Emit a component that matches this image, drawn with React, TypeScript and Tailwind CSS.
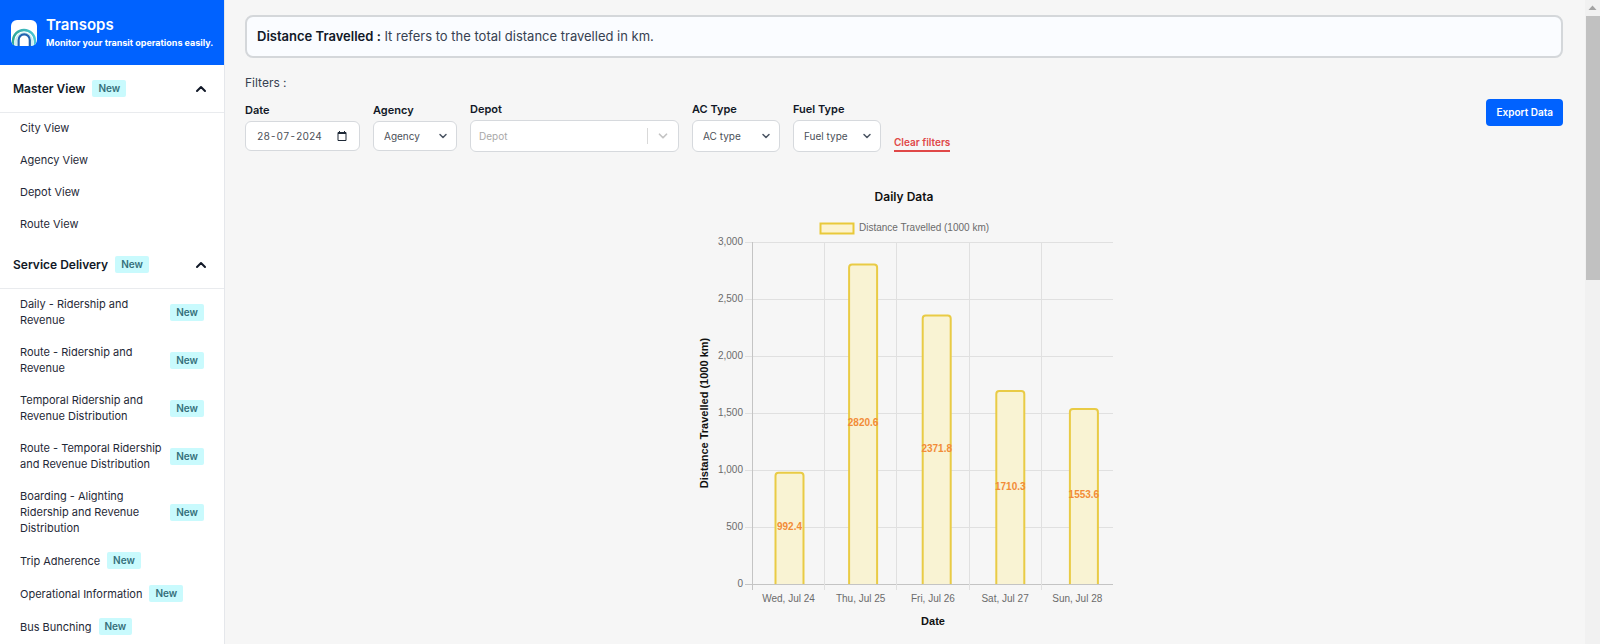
import { useState } from 'react';
import { ChevronDown, ChevronUp } from 'lucide-react';

type NavItem = { label: string; isNew?: boolean };

const sections: { title: string; items: NavItem[] }[] = [
  {
    title: 'Master View',
    items: [
      { label: 'City View' },
      { label: 'Agency View' },
      { label: 'Depot View' },
      { label: 'Route View' },
    ],
  },
  {
    title: 'Service Delivery',
    items: [
      { label: 'Daily - Ridership and Revenue', isNew: true },
      { label: 'Route - Ridership and Revenue', isNew: true },
      { label: 'Temporal Ridership and Revenue Distribution', isNew: true },
      { label: 'Route - Temporal Ridership and Revenue Distribution', isNew: true },
      { label: 'Boarding - Alighting Ridership and Revenue Distribution', isNew: true },
      { label: 'Trip Adherence', isNew: true },
      { label: 'Operational Information', isNew: true },
      { label: 'Bus Bunching', isNew: true },
    ],
  },
];

const chartData = [
  { day: 'Wed, Jul 24', value: 992.4 },
  { day: 'Thu, Jul 25', value: 2820.6 },
  { day: 'Fri, Jul 26', value: 2371.8 },
  { day: 'Sat, Jul 27', value: 1710.3 },
  { day: 'Sun, Jul 28', value: 1553.6 },
];

const NewBadge = () => (
  <span className="shrink-0 rounded-xs bg-[#c9fafd] px-[6px] text-[10px] leading-[17px] font-semibold text-[#35707b]">
    New
  </span>
);

const Logo = () => (
  <svg width="26" height="26" viewBox="0 0 26 26" className="shrink-0" aria-hidden="true">
    <defs>
      <clipPath id="logo-clip">
        <rect width="26" height="26" rx="6" />
      </clipPath>
      <linearGradient id="logo-arc" x1="0" x2="1">
        <stop offset="0" stopColor="#2fa79b" />
        <stop offset="1" stopColor="#4cc6d6" />
      </linearGradient>
    </defs>
    <g clipPath="url(#logo-clip)" fill="none">
      <rect width="26" height="26" fill="#fff" />
      <path d="M2 26V21a11 11 0 0 1 22 0V26" stroke="url(#logo-arc)" strokeWidth="2.400" />
      <path d="M5 26V21a8 8 0 0 1 16 0V26" stroke="#c4ebee" strokeWidth="1.600" />
      <path d="M7.600 26V20a5.600 5.600 0 0 1 11.200 0V26" stroke="#2263b0" strokeWidth="2.200" />
    </g>
  </svg>
);

const Sidebar = () => {
  const [closed, setClosed] = useState<Record<string, boolean>>({});

  return (
    <aside className="flex w-[225px] shrink-0 flex-col overflow-hidden border-r border-[#e5e7eb] bg-white">
      <div className="flex h-[65px] shrink-0 items-center gap-[9px] bg-[#0062ff] pl-[11px] text-white">
        <Logo />
        <div className="whitespace-nowrap">
          <div className="text-[15px] leading-[20px] font-semibold">Transops</div>
          <div className="text-[9px] leading-[16px] font-bold">Monitor your transit operations easily.</div>
        </div>
      </div>
      <nav>
        {sections.map((section) => (
          <div key={section.title}>
            <button
              type="button"
              onClick={() => setClosed({ ...closed, [section.title]: !closed[section.title] })}
              className="flex h-12 w-full items-center gap-[7px] border-b border-[#e9ebee] pr-[15px] pl-[13px] text-[12px] font-semibold text-[#111827]"
            >
              {section.title}
              <NewBadge />
              <ChevronUp className="ml-auto h-4 w-4" strokeWidth={3} />
            </button>
            {!closed[section.title] && (
              <ul>
                {section.items.map((item) => (
                  <li key={item.label}>
                    <a
                      href="#"
                      className="flex items-center gap-[7px] pt-[7px] pr-5 pb-[9px] pl-5 text-[11px] leading-[16px] text-[#1f2937]"
                    >
                      <span>{item.label}</span>
                      {item.isNew && <NewBadge />}
                    </a>
                  </li>
                ))}
              </ul>
            )}
          </div>
        ))}
      </nav>
    </aside>
  );
};

const SelectFilter = ({ id, label, placeholder, tall }: {
  id: string;
  label: string;
  placeholder: string;
  tall?: boolean;
}) => (
  <div className="flex flex-col gap-[3px]">
    <label htmlFor={id} className="text-[11px] leading-[16px] font-semibold text-[#111827]">{label}</label>
    <div className="relative">
      <select
        id={id}
        className={`block appearance-none rounded-md border border-[#d6d9dd] bg-white pl-[10px] text-[10px] text-[#4b5058] ${
          tall ? 'h-8 w-[88px]' : 'h-[30px] w-[84px]'
        }`}
      >
        <option>{placeholder}</option>
      </select>
      <ChevronDown className="pointer-events-none absolute top-1/2 right-2 h-3 w-3 -translate-y-1/2 text-[#4b5563]" strokeWidth={3} />
    </div>
  </div>
);

// plot area inside the svg
const LEFT = 58;
const TOP = 26;
const BOTTOM = 368;
const COLUMN = 72.2;
const BAR_STEP = 73.6;
const BAR_WIDTH = 28;

const DailyChart = () => {
  const ticks = [0, 500, 1000, 1500, 2000, 2500, 3000];
  const toY = (value: number) => BOTTOM - (value / 3000) * (BOTTOM - TOP);

  return (
    <svg width="420" height="424" role="img" aria-label="Daily distance travelled" className='font-["Liberation_Sans",sans-serif] text-[10px]'>
      <rect x="126.500" y="7.500" width="33" height="10" fill="#fcf3cf" stroke="#e9c93a" strokeWidth="2" />
      <text x="165" y="15" fill="#6b6b6b">Distance Travelled (1000 km)</text>

      {ticks.map((tick) => {
        const y = Math.floor(toY(tick)) + 0.5;
        return (
          <g key={tick}>
            <line x1={LEFT - 7} x2="419" y1={y} y2={y} stroke={tick === 0 ? '#c4c4c4' : '#e0e0e0'} />
            <text x="49" y={y + 2} textAnchor="end" fill="#6b6b6b">{tick.toLocaleString('en-US')}</text>
          </g>
        );
      })}
      {chartData.map((d, i) => {
        const x = Math.round(LEFT + i * COLUMN) + 0.5;
        return (
          <line key={d.day} x1={x} x2={x} y1={TOP} y2={BOTTOM + 6} stroke={i === 0 ? '#c4c4c4' : '#e0e0e0'} />
        );
      })}

      {chartData.map((d, i) => {
        const center = 95.5 + i * BAR_STEP;
        const x = center - BAR_WIDTH / 2;
        const y = toY(d.value) + 2;
        return (
          <g key={d.day}>
            <path
              d={`M${x} ${BOTTOM}V${y + 3}q0 -3 3 -3h${BAR_WIDTH - 6}q3 0 3 3V${BOTTOM}`}
              fill="#f9f3d3"
              stroke="#e9cb45"
              strokeWidth="2"
            />
            <text x={center} y={(y + BOTTOM) / 2 + 2} textAnchor="middle" fontWeight="bold" fill="#f28c38">
              {d.value}
            </text>
            <text x={LEFT + 36.5 + i * COLUMN} y="386" textAnchor="middle" fill="#6b6b6b">{d.day}</text>
          </g>
        );
      })}

      <g className="text-[11px]" textAnchor="middle" fontWeight="bold" fill="#111">
        <text x="239" y="409">Date</text>
        <text transform="translate(14 197) rotate(-90)">Distance Travelled (1000 km)</text>
      </g>
    </svg>
  );
};

const App = () => {
  const [date, setDate] = useState('28-07-2024');

  return (
    <div className="flex h-screen overflow-hidden bg-[#f6f6f6] font-[Inter,sans-serif]">
      <Sidebar />
      <main className="min-w-0 flex-1 overflow-hidden pt-[15px] pr-[22px] pl-5">
        <p className="rounded-lg border-2 border-[#d4d7da] bg-[#fafcff] px-[10px] py-[9px] text-[13px] leading-[21px] text-[#374151]">
          <strong className="font-semibold text-[#111827]">Distance Travelled :</strong> It refers to the total distance travelled in km.
        </p>

        <div className="mt-4 text-[12px] leading-[18px] text-[#374151]">Filters :</div>
        <div className="mt-[7px] flex items-start justify-between">
          <div className="flex items-center gap-[13px] pt-[2px]">
            <div className="flex flex-col gap-[3px]">
              <label htmlFor="date" className="text-[11px] leading-[16px] font-semibold text-[#111827]">Date</label>
              <div className="flex h-[30px] w-[115px] items-center rounded-md border border-[#d6d9dd] bg-white pr-3 pl-[11px]">
                <input
                  id="date"
                  value={date}
                  onChange={(e) => setDate(e.target.value)}
                  className="w-full min-w-0 text-[10px] text-[#4b5058] tabular-nums outline-none"
                />
                <button type="button" aria-label="Open calendar">
                  <svg width="10" height="10" viewBox="0 0 10 10" fill="none" stroke="#1f2937">
                    <path d="M1 1.500h8v8H1z M1 2.500h8" />
                    <path d="M2.500 0v2M7.500 0v2" />
                  </svg>
                </button>
              </div>
            </div>
            <SelectFilter id="agency" label="Agency" placeholder="Agency" />
            <div className="flex flex-col gap-[3px]">
              <label htmlFor="depot" className="text-[11px] leading-[16px] font-semibold text-[#111827]">Depot</label>
              <div className="flex h-8 w-[209px] items-center rounded-md border border-[#d6d9dd] bg-white pl-2">
                <input id="depot" placeholder="Depot" className="min-w-0 flex-1 text-[10px] outline-none placeholder:text-[#a8a8a8]" />
                <span className="h-4 w-px bg-[#d9d9d9]" />
                <ChevronDown className="mx-2 h-[14px] w-[14px] text-[#c4c4c4]" strokeWidth={3} />
              </div>
            </div>
            <SelectFilter id="ac-type" label="AC Type" placeholder="AC type" tall />
            <SelectFilter id="fuel-type" label="Fuel Type" placeholder="Fuel type" tall />
            <button type="button" className="self-end border-b-2 border-[#e04848] text-[10px] leading-[15px] font-semibold text-[#e04848]">
              Clear filters
            </button>
          </div>
          <button type="button" className="h-[27px] rounded-sm bg-[#0062ff] px-[10px] text-[10px] font-semibold text-white">
            Export Data
          </button>
        </div>

        <div className="mt-9 flex flex-col items-center">
          <h2 className="text-[12px] leading-[18px] font-semibold text-[#111]">Daily Data</h2>
          <div className="mt-[10px]">
            <DailyChart />
          </div>
        </div>
      </main>

      {/* scroll track */}
      <div className="flex w-[15px] shrink-0 flex-col items-center bg-[#f1f1f1]">
        <svg width="15" height="16" viewBox="0 0 15 16" className="shrink-0" aria-hidden="true">
          <path d="M7.500 5.500l4 4.500h-8z" fill="#a3a3a3" />
        </svg>
        <div className="h-[41%] w-[14px] bg-[#c1c1c1]" />
      </div>
    </div>
  );
};

export default App;
